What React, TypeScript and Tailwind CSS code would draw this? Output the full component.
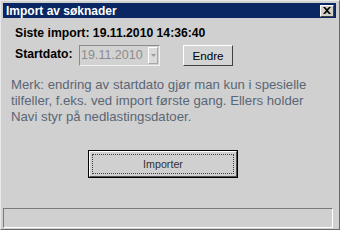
export default function App() {
  return (
    <div
      className="w-[340px] h-[230px] bg-[#d0d0d0] border border-t-[#e8e8e8] border-l-[#e8e8e8] border-r-[#6a6a6a] border-b-[#6a6a6a] flex flex-col pt-[2px] pl-[2px] pr-[2px] pb-[1px] text-black"
      style={{ fontFamily: '"Liberation Sans", Arial, sans-serif' }}
    >
      {/* Title bar */}
      <div className="h-[15px] w-[333px] bg-[#0a2763] flex items-center justify-between pl-[3px] pr-[2px]">
        <span className="text-white font-bold text-[12px] leading-none">Import av søknader</span>
        <button className="w-[14px] h-[12px] bg-[#d4d0c8] border border-t-white border-l-white border-r-[#404040] border-b-[#404040] flex items-center justify-center">
          <svg width="8" height="7" viewBox="0 0 8 7">
            <path d="M0 0 L2 0 L4 2 L6 0 L8 0 L5 3.5 L8 7 L6 7 L4 5 L2 7 L0 7 L3 3.5 Z" fill="#000" />
          </svg>
        </button>
      </div>

      {/* Siste import */}
      <div className="mt-[7px] ml-[12px] h-[16px] font-bold text-[12.2px] leading-[16px]">
        Siste import: 19.11.2010 14:36:40
      </div>

      {/* Startdato row */}
      <div className="mt-[4px] ml-[12px] flex items-center h-[21px]">
        <span className="font-bold text-[12.2px] w-[64px] -mt-[3px]">Startdato:</span>
        <div className="w-[81px] h-[21px] bg-[#d2d2d2] border border-t-[#8a8a8a] border-l-[#8a8a8a] border-r-[#f0f0f0] border-b-[#f0f0f0] flex items-center">
          <span className="flex-1 pl-[1px] text-[12.5px] text-[#8c8c8c]">19.11.2010</span>
          <div className="w-[10px] h-[17px] mr-[1px] bg-[#dadada] border border-t-white border-l-white border-r-[#a8a8a8] border-b-[#a8a8a8] flex items-center justify-center">
            <svg width="5" height="3" viewBox="0 0 5 3">
              <path d="M0 0 L5 0 L2.5 3 Z" fill="#9a9a9a" />
            </svg>
          </div>
        </div>
        <button className="ml-[23px] w-[50px] h-[21px] bg-[#d4d4d4] border border-t-white border-l-white border-r-[#404040] border-b-[#404040] text-[11.7px] leading-none">
          Endre
        </button>
      </div>

      {/* Note */}
      <p className="mt-[11px] ml-[8px] w-[312px] text-[13.2px] leading-[16px] text-[#5a6675]">
        Merk: endring av startdato gjør man kun i spesielle tilfeller, f.eks. ved import første gang. Ellers holder Navi styr på nedlastingsdatoer.
      </p>

      {/* Importer */}
      <div className="mt-[25px] ml-[85px]">
        <button className="w-[150px] h-[28px] bg-[#d0d0d0] border border-black p-0 block">
          <div className="w-full h-full border border-t-white border-l-white border-r-[#505050] border-b-[#505050] p-[2px]">
            <div className="w-full h-full border border-dotted border-[#404040] flex items-center justify-center text-[#303030] text-[10.7px]">
              Importer
            </div>
          </div>
        </button>
      </div>

      <div className="flex-1" />

      {/* Status bar */}
      <div className="w-[330px] h-[20px] border border-t-[#7a7a7a] border-l-[#7a7a7a] border-r-white border-b-white" />
    </div>
  );
}
